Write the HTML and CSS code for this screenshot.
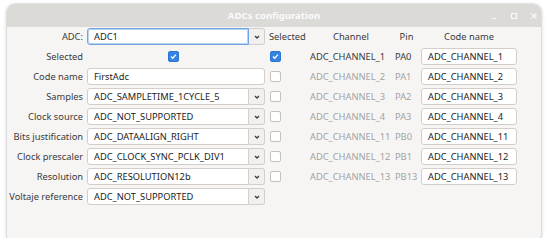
FILE: index.html
```html
<!DOCTYPE html>
<html>
<head>
<meta charset="utf-8">
<link rel="stylesheet" href="styles.css">
</head>
<body>
<div class="window">
  <div class="titlebar">
    <span></span>
    <span class="title">ADCs configuration</span>
    <div class="controls">
      <svg class="ctl" viewBox="0 0 14 14"><path d="M5 9.5h4" stroke="#f7f7f7" stroke-width="1.2"/></svg>
      <svg class="ctl" viewBox="0 0 14 14"><rect x="4.5" y="4.5" width="5" height="5" fill="none" stroke="#f7f7f7" stroke-width="1.2"/></svg>
      <svg class="ctl" viewBox="0 0 14 14"><path d="M4.5 4.5l5 5M9.5 4.5l-5 5" stroke="#f7f7f7" stroke-width="1.2"/></svg>
    </div>
  </div>
  <div class="content">
    <!-- row 0 -->
    <span class="lbl">ADC:</span>
    <div class="combo"><span class="entry focus">ADC1</span><span class="btn"><svg viewBox="0 0 8 8"><path d="M2 3l2 2 2-2" fill="none" stroke="#3d3d3d" stroke-width="1.3"/></svg></span></div>
    <span class="hdr sel">Selected</span>
    <span class="hdr">Channel</span>
    <span class="hdr">Pin</span>
    <span class="hdr">Code name</span>

    <!-- row 1 -->
    <span class="lbl">Selected</span>
    <span class="chk on left"><svg viewBox="0 0 11 11"><path d="M2.5 5.6l2 2 4-4.4" fill="none" stroke="#fff" stroke-width="1.6"/></svg></span>
    <span class="chk on"><svg viewBox="0 0 11 11"><path d="M2.5 5.6l2 2 4-4.4" fill="none" stroke="#fff" stroke-width="1.6"/></svg></span>
    <span class="ch">ADC_CHANNEL_1</span>
    <span class="ch">PA0</span>
    <span class="entry code">ADC_CHANNEL_1</span>

    <!-- row 2 -->
    <span class="lbl">Code name</span>
    <span class="entry wide">FirstAdc</span>
    <span class="chk"></span>
    <span class="ch off">ADC_CHANNEL_2</span>
    <span class="ch off">PA1</span>
    <span class="entry code">ADC_CHANNEL_2</span>

    <!-- row 3 -->
    <span class="lbl">Samples</span>
    <div class="combo"><span class="entry">ADC_SAMPLETIME_1CYCLE_5</span><span class="btn"><svg viewBox="0 0 8 8"><path d="M2 3l2 2 2-2" fill="none" stroke="#3d3d3d" stroke-width="1.3"/></svg></span></div>
    <span class="chk"></span>
    <span class="ch off">ADC_CHANNEL_3</span>
    <span class="ch off">PA2</span>
    <span class="entry code">ADC_CHANNEL_3</span>

    <!-- row 4 -->
    <span class="lbl">Clock source</span>
    <div class="combo"><span class="entry">ADC_NOT_SUPPORTED</span><span class="btn"><svg viewBox="0 0 8 8"><path d="M2 3l2 2 2-2" fill="none" stroke="#3d3d3d" stroke-width="1.3"/></svg></span></div>
    <span class="chk"></span>
    <span class="ch off">ADC_CHANNEL_4</span>
    <span class="ch off">PA3</span>
    <span class="entry code">ADC_CHANNEL_4</span>

    <!-- row 5 -->
    <span class="lbl">Bits justification</span>
    <div class="combo"><span class="entry">ADC_DATAALIGN_RIGHT</span><span class="btn"><svg viewBox="0 0 8 8"><path d="M2 3l2 2 2-2" fill="none" stroke="#3d3d3d" stroke-width="1.3"/></svg></span></div>
    <span class="chk"></span>
    <span class="ch off">ADC_CHANNEL_11</span>
    <span class="ch off">PB0</span>
    <span class="entry code">ADC_CHANNEL_11</span>

    <!-- row 6 -->
    <span class="lbl">Clock prescaler</span>
    <div class="combo"><span class="entry">ADC_CLOCK_SYNC_PCLK_DIV1</span><span class="btn"><svg viewBox="0 0 8 8"><path d="M2 3l2 2 2-2" fill="none" stroke="#3d3d3d" stroke-width="1.3"/></svg></span></div>
    <span class="chk"></span>
    <span class="ch off">ADC_CHANNEL_12</span>
    <span class="ch off">PB1</span>
    <span class="entry code">ADC_CHANNEL_12</span>

    <!-- row 7 -->
    <span class="lbl">Resolution</span>
    <div class="combo"><span class="entry">ADC_RESOLUTION12b</span><span class="btn"><svg viewBox="0 0 8 8"><path d="M2 3l2 2 2-2" fill="none" stroke="#3d3d3d" stroke-width="1.3"/></svg></span></div>
    <span class="chk"></span>
    <span class="ch off">ADC_CHANNEL_13</span>
    <span class="ch off">PB13</span>
    <span class="entry code">ADC_CHANNEL_13</span>

    <!-- row 8 -->
    <span class="lbl">Voltaje reference</span>
    <div class="combo"><span class="entry">ADC_NOT_SUPPORTED</span><span class="btn"><svg viewBox="0 0 8 8"><path d="M2 3l2 2 2-2" fill="none" stroke="#3d3d3d" stroke-width="1.3"/></svg></span></div>
  </div>
</div>
</body>
</html>
```
FILE: styles.css
```css
* { box-sizing: border-box; }
html, body { margin: 0; padding: 0; background: #ffffff; }
body {
  font-family: "Noto Sans", "DejaVu Sans", sans-serif;
  font-size: 9.3px;
  color: #3a3a3a;
}
.window {
  margin: 4px 0 0 7px;
  width: 534px;
  height: 234px;
  background: #f6f5f4;
  border-radius: 8px 8px 2px 2px;
  box-shadow: 0 1px 4px rgba(0,0,0,0.22), 0 0 0 1px rgba(0,0,0,0.05);
  overflow: hidden;
}
.titlebar {
  height: 23px;
  background: #dcdad7;
  display: grid;
  grid-template-columns: 1fr auto 1fr;
  align-items: center;
}
.title {
  color: #fbfbfb;
  font-weight: bold;
  font-size: 9.6px;
}
.controls {
  justify-self: end;
  display: flex;
  gap: 6px;
}
.ctl { width: 14px; height: 14px; display: block; }
.content {
  padding-top: 1px;
  display: grid;
  grid-template-columns: 77px 178px 39px 82px 23px 96px;
  column-gap: 3px;
  row-gap: 3px;
  grid-auto-rows: 17px;
  align-items: center;
}
.lbl {
  justify-self: end;
  white-space: nowrap;
  margin-right: 1px;
}
.combo {
  display: flex;
  height: 17px;
}
.entry {
  display: flex;
  align-items: center;
  height: 17px;
  padding-left: 6px;
  background: #ffffff;
  border: 1px solid #d3cec9;
  border-radius: 3px;
  color: #1c1c1c;
  white-space: nowrap;
  overflow: hidden;
}
.combo .entry {
  flex: 1;
  border-radius: 3px 0 0 3px;
}
.entry.focus {
  border-color: #6ea3e5;
  box-shadow: inset 0 0 0 1px #b8d2f2;
}
.btn {
  width: 16px;
  height: 17px;
  background: #f1f0ef;
  border: 1px solid #d3cec9;
  border-left: none;
  border-radius: 0 3px 3px 0;
  display: flex;
  align-items: center;
  justify-content: center;
}
.btn svg { width: 8px; height: 8px; display: block; }
.entry.wide { width: 178px; }
.entry.code { width: 96px; padding-left: 6px; }
.hdr { justify-self: center; white-space: nowrap; }
.hdr.sel { justify-self: start; margin-left: 1px; }
.chk {
  width: 11px;
  height: 11px;
  margin-left: 2px;
  border: 1px solid #c4c0bb;
  border-radius: 2px;
  background: #ffffff;
  display: flex;
}
.chk.on {
  background: #3584e4;
  border-color: #2b74d0;
}
.chk svg { width: 9px; height: 9px; display: block; }
.chk.left { justify-self: center; margin: 0 6px 0 0; }
.ch { white-space: nowrap; }
.ch.off { color: #a3a3a3; }
```
